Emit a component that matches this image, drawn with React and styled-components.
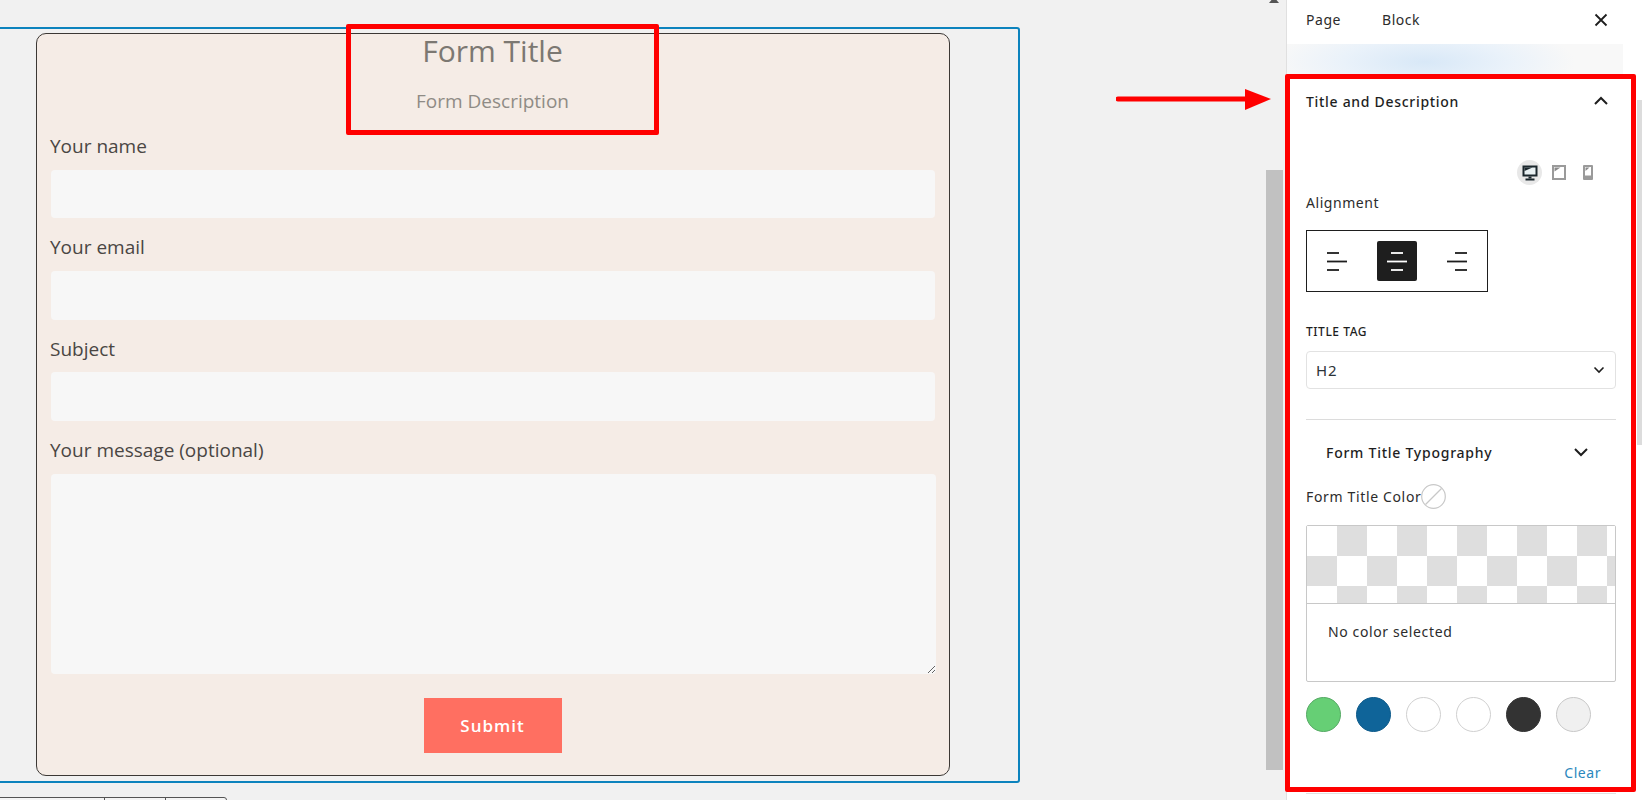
import * as React from 'react';
import styled, {createGlobalStyle} from 'styled-components';

const FORM_FONT = '"Open Sans", Lato, sans-serif';
const PANEL_FONT = '"Noto Sans", "Open Sans", sans-serif';
const INK = '#1e1e1e';
const RED = '#ff0000';

const GlobalStyle = createGlobalStyle`
  html, body {
    margin: 0;
    padding: 0;
    background: #f1f1f1;
  }
  * {
    box-sizing: border-box;
  }
`;

const Page = styled.div`
  position: relative;
  display: flex;
  width: 1642px;
  height: 800px;
  overflow: hidden;
  background: #f1f1f1;
`;

const Canvas = styled.main`
  position: relative;
  flex: 0 0 1286px;
  padding-top: 27px;
`;

const BlockFrame = styled.div`
  width: 1030px;
  height: 756px;
  margin-left: -10px;
  padding: 4px 0 0 44px;
  border: 2px solid #0c83bd;
  border-radius: 3px;
`;

const FormCard = styled.form`
  display: flex;
  flex-direction: column;
  width: 914px;
  height: 743px;
  padding: 0 14px 0 13px;
  background: #f5ece6;
  border: 1px solid #3c3835;
  border-radius: 10px;
  font-family: ${FORM_FONT};
`;

const FormTitle = styled.h2`
  margin: 0;
  height: 34px;
  font-size: 30px;
  line-height: 33px;
  font-weight: 400;
  text-align: center;
  color: #7c7872;
`;

const FormDescription = styled.p`
  margin: 21px 0 0;
  height: 26px;
  font-size: 19px;
  line-height: 24px;
  text-align: center;
  color: #8f8b85;
`;

const FieldLabel = styled.label`
  display: block;
  margin-top: ${p => p.$top}px;
  height: 24px;
  font-size: 19px;
  line-height: ${p => p.$line || 22}px;
  color: #4a4643;
`;

const TextInput = styled.input`
  display: block;
  flex: none;
  width: 884px;
  height: ${p => p.$height || 48}px;
  margin: ${p => p.$top}px 0 0 1px;
  padding: 0 10px;
  background: #f7f7f7;
  border: 0;
  border-radius: 4px;
  outline: none;
`;

const MessageInput = styled.textarea`
  display: block;
  flex: none;
  width: 885px;
  height: 200px;
  margin: 12px 0 0 1px;
  background: #f7f7f7;
  border: 0;
  border-radius: 4px;
  outline: none;
`;

const SubmitButton = styled.button`
  align-self: center;
  flex: none;
  width: 138px;
  height: 55px;
  margin-top: 24px;
  background: #ff6f61;
  border: 0;
  color: #fff;
  font-family: ${FORM_FONT};
  font-size: 17px;
  font-weight: 600;
  letter-spacing: 1px;
`;

const BlockToolbar = styled.div`
  display: flex;
  width: 228px;
  height: 40px;
  margin: 14px 0 0 -1px;
  background: #f5f5f5;
  border: 1px solid #555;
  border-radius: 0 3px 0 0;
`;

const ToolbarCell = styled.div`
  flex: 0 0 ${p => p.$width}px;
  border-right: ${p => (p.$last ? 0 : '1px solid #555')};
`;

const ScrollThumb = styled.div`
  position: absolute;
  left: 1266px;
  top: 170px;
  width: 17px;
  height: 600px;
  background: #c1c1c1;
`;

const ScrollArrow = styled.div`
  position: absolute;
  left: 1269px;
  top: -3px;
  width: 0;
  height: 0;
  border-left: 5px solid transparent;
  border-right: 5px solid transparent;
  border-bottom: 6px solid #555;
`;

const Sidebar = styled.aside`
  position: relative;
  flex: 0 0 356px;
  background: #fff;
  border-left: 1px solid #e0e0e0;
  font-family: ${PANEL_FONT};
  color: ${INK};
  font-size: 14px;
  letter-spacing: 0.55px;
`;

const TabBar = styled.div`
  display: flex;
  align-items: center;
  height: 44px;
  padding: 0 34px 4px 19px;
`;

const Tab = styled.span`
  width: 76px;
  font-size: 14px;
  line-height: 20px;
  color: #2c2c2c;
`;

const CloseIcon = styled.svg`
  margin-left: auto;
  width: 14px;
  height: 14px;
`;

const BlurStrip = styled.div`
  height: 30px;
  width: 336px;
  background: radial-gradient(ellipse 150px 40px at 138px 18px, #d8e8f7 0%, #eaf2fa 55%, #f8f8f8 100%);
`;

const PanelBody = styled.div`
  padding: 0 26px 0 19px;
`;

const SectionHead = styled.div`
  display: flex;
  align-items: center;
  justify-content: space-between;
  height: 54px;
  padding-right: 7px;
  font-size: 14px;
  font-weight: 500;
  letter-spacing: 0.7px;
`;

const Chevron = styled.svg`
  width: 16px;
  height: 10px;
  fill: none;
  stroke: ${INK};
  stroke-width: 2;
`;

const DeviceRow = styled.div`
  display: flex;
  align-items: center;
  justify-content: flex-end;
  height: 25px;
  margin-top: 32px;
  padding-right: 16px;
`;

const DeviceButton = styled.span`
  display: flex;
  align-items: center;
  justify-content: center;
  width: 25px;
  height: 25px;
  margin-left: ${p => p.$gap || 0}px;
  border-radius: 50%;
  background: ${p => (p.$active ? '#e8e8e8' : 'transparent')};
`;

const FieldCaption = styled.div`
  margin-top: 8px;
  font-size: 14px;
  line-height: 20px;
  color: #2c2c2c;
`;

const AlignGroup = styled.div`
  display: flex;
  align-items: center;
  gap: 20px;
  width: 182px;
  height: 62px;
  margin-top: 17px;
  padding-left: 10px;
  border: 1px solid ${INK};
`;

const AlignButton = styled.span`
  display: flex;
  align-items: center;
  justify-content: center;
  width: 40px;
  height: 40px;
  border-radius: 2px;
  background: ${p => (p.$active ? INK : 'transparent')};
  color: ${p => (p.$active ? '#fff' : INK)};
`;

const TagLabel = styled.div`
  margin-top: 32px;
  font-size: 12px;
  line-height: 16px;
  font-weight: 500;
  color: ${INK};
`;

const SelectBox = styled.div`
  display: flex;
  align-items: center;
  justify-content: space-between;
  height: 38px;
  margin-top: 11px;
  padding: 0 10px 0 9px;
  border: 1px solid #e2e2e2;
  border-radius: 4px;
  font-size: 15px;
  letter-spacing: 1px;
  color: #2c3338;
`;

const SmallChevron = styled(Chevron)`
  width: 12px;
  height: 8px;
  stroke-width: 1.6;
`;

const Divider = styled.hr`
  height: 1px;
  margin: 30px 0 0;
  border: 0;
  background: #dcdcdc;
`;

const SubHead = styled.div`
  display: flex;
  align-items: center;
  justify-content: space-between;
  height: 32px;
  margin-top: 16px;
  padding: 0 27px 0 20px;
  font-size: 14px;
  font-weight: 500;
  letter-spacing: 0.75px;
`;

const ColorRow = styled.div`
  display: flex;
  align-items: center;
  height: 24px;
  margin-top: 16px;
  font-size: 14px;
  letter-spacing: 0.65px;
  color: #2c2c2c;
`;

const NoColor = styled.svg`
  flex: none;
  width: 25px;
  height: 25px;
  margin-left: 0;
`;

const Picker = styled.div`
  height: 157px;
  margin-top: 17px;
  background: #fff;
  border: 1px solid #c8c8c8;
  border-radius: 2px;
`;

const Checker = styled.div`
  height: 78px;
  background: repeating-conic-gradient(#dedede 0 25%, #fff 0 50%) 0 0 / 60px 60px;
  border-bottom: 1px solid #c8c8c8;
`;

const PickerText = styled.div`
  padding: 18px 0 0 21px;
  font-size: 14px;
  line-height: 20px;
  letter-spacing: 0.62px;
  color: #2c2c2c;
`;

const Swatches = styled.div`
  display: flex;
  gap: 15px;
  margin-top: 15px;
`;

const Swatch = styled.span`
  width: 35px;
  height: 35px;
  border-radius: 50%;
  background: ${p => p.$color};
  border: 1px solid ${p => p.$edge};
`;

const ClearLink = styled.a`
  display: block;
  margin-top: 31px;
  padding-right: 15px;
  font-size: 14px;
  line-height: 20px;
  text-align: right;
  color: #2b87bd;
`;

const BottomRule = styled.div`
  height: 1px;
  margin-top: 10px;
  background: #e0e0e0;
`;

const PanelScroll = styled.div`
  position: absolute;
  left: 350px;
  top: 100px;
  width: 6px;
  height: 345px;
  background: #dcdcdc;
`;

const RedBox = styled.div`
  position: absolute;
  left: ${p => p.$x}px;
  top: ${p => p.$y}px;
  width: ${p => p.$w}px;
  height: ${p => p.$h}px;
  border: 5px solid ${RED};
  border-radius: 2px;
  pointer-events: none;
`;

const Arrow = styled.svg`
  position: absolute;
  left: 1116px;
  top: 86px;
  width: 156px;
  height: 26px;
`;

const AlignIcon = ({offsets}) => (
  <svg width="20" height="20" viewBox="0 0 20 20" fill="none" stroke="currentColor" strokeWidth="1.8">
    <path d={`M${offsets[0]} 2h12`} />
    <path d="M0 10.5h20" />
    <path d={`M${offsets[1]} 19h12`} />
  </svg>
);

const MonitorIcon = () => (
  <svg width="16" height="16" viewBox="0 0 16 16">
    <rect x="0.5" y="0.5" width="15" height="11" fill="#1a262c" />
    <path d="M2.5 2.5h11v7h-11z" fill="#e8f0f2" />
    <path d="M2.5 2.5h8L2.5 6z" fill="#1a262c" />
    <path d="M6.5 11.5h3v2h-3z" fill="#1a262c" />
    <path d="M3.5 13.5h9v2h-9z" fill="#1a262c" />
  </svg>
);

const TabletIcon = () => (
  <svg width="14" height="15" viewBox="0 0 14 15">
    <rect x="0" y="0" width="14" height="15" fill="#9a9a9a" />
    <rect x="2" y="2" width="10" height="11" fill="#fff" />
    <path d="M2.5 2.5h6l-6 4z" fill="#8a8a8a" />
  </svg>
);

const PhoneIcon = () => (
  <svg width="10" height="15" viewBox="0 0 10 15">
    <rect x="0" y="0" width="10" height="15" rx="1" fill="#9a9a9a" />
    <rect x="2" y="2" width="6" height="8.5" fill="#fff" />
    <path d="M2.5 2.5h4l-4 3.5z" fill="#8a8a8a" />
  </svg>
);

const SWATCHES = [
  {color: '#66cf75', edge: '#55a964'},
  {color: '#0f6499', edge: '#0d5a8a'},
  {color: '#fff', edge: '#d0d0d0'},
  {color: '#fff', edge: '#d0d0d0'},
  {color: '#333', edge: '#333'},
  {color: '#f0f0f0', edge: '#c8c8c8'},
];

export default function App() {
  return (
    <Page>
      <GlobalStyle />
      <Canvas>
        <BlockFrame>
          <FormCard>
            <FormTitle>Form Title</FormTitle>
            <FormDescription>Form Description</FormDescription>
            <FieldLabel $top={20}>Your name</FieldLabel>
            <TextInput $top={11} />
            <FieldLabel $top={17} $line={24}>Your email</FieldLabel>
            <TextInput $top={12} $height={49} />
            <FieldLabel $top={18}>Subject</FieldLabel>
            <TextInput $top={10} $height={49} />
            <FieldLabel $top={17} $line={24}>Your message (optional)</FieldLabel>
            <MessageInput />
            <SubmitButton type="button">Submit</SubmitButton>
          </FormCard>
        </BlockFrame>
        <BlockToolbar>
          <ToolbarCell $width={105} />
          <ToolbarCell $width={61} />
          <ToolbarCell $width={60} $last />
        </BlockToolbar>
        <ScrollArrow />
        <ScrollThumb />
      </Canvas>

      <Sidebar>
        <TabBar>
          <Tab>Page</Tab>
          <Tab>Block</Tab>
          <CloseIcon viewBox="0 0 14 14" fill="none" stroke={INK} strokeWidth="1.8">
            <path d="M1.5 1.5l11 11M12.5 1.5l-11 11" />
          </CloseIcon>
        </TabBar>
        <BlurStrip />
        <PanelBody>
          <SectionHead>
            Title and Description
            <Chevron viewBox="0 0 16 10"><path d="M2 8l6-6 6 6" /></Chevron>
          </SectionHead>
          <DeviceRow>
            <DeviceButton $active><MonitorIcon /></DeviceButton>
            <DeviceButton $gap={4}><TabletIcon /></DeviceButton>
            <DeviceButton $gap={4}><PhoneIcon /></DeviceButton>
          </DeviceRow>
          <FieldCaption>Alignment</FieldCaption>
          <AlignGroup>
            <AlignButton><AlignIcon offsets={[0, 0]} /></AlignButton>
            <AlignButton $active><AlignIcon offsets={[4, 4]} /></AlignButton>
            <AlignButton><AlignIcon offsets={[8, 8]} /></AlignButton>
          </AlignGroup>
          <TagLabel>TITLE TAG</TagLabel>
          <SelectBox>
            H2
            <SmallChevron viewBox="0 0 12 8"><path d="M1.5 1.5L6 6l4.5-4.5" /></SmallChevron>
          </SelectBox>
          <Divider />
          <SubHead>
            Form Title Typography
            <Chevron viewBox="0 0 16 10"><path d="M2 2l6 6 6-6" /></Chevron>
          </SubHead>
          <ColorRow>
            Form Title Color
            <NoColor viewBox="0 0 25 25" fill="none" stroke="#c8c8c8" strokeWidth="1.2">
              <circle cx="12.5" cy="12.5" r="11.8" />
              <path d="M4.5 20.5l16-16" />
            </NoColor>
          </ColorRow>
          <Picker>
            <Checker />
            <PickerText>No color selected</PickerText>
          </Picker>
          <Swatches>
            {SWATCHES.map((s, i) => (
              <Swatch key={i} $color={s.color} $edge={s.edge} />
            ))}
          </Swatches>
          <ClearLink>Clear</ClearLink>
          <BottomRule />
        </PanelBody>
        <PanelScroll />
      </Sidebar>

      <RedBox $x={346} $y={24} $w={313} $h={111} />
      <RedBox $x={1285} $y={74} $w={351} $h={718} />
      <Arrow viewBox="0 0 156 26" fill={RED}>
        <path d="M2 10.5h128v5H2a2.5 2.5 0 0 1 0-5z" />
        <path d="M129 3l26 10-26 11z" />
      </Arrow>
    </Page>
  );
}
